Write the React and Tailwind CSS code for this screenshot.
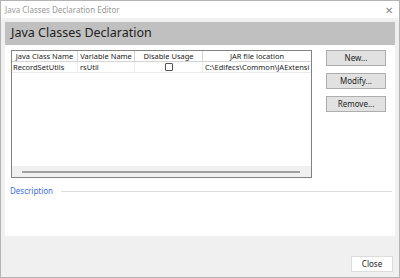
import React from 'react';

const font = { fontFamily: '"Noto Sans", "Open Sans", sans-serif' };

const Btn = ({ label, className = '' }) => (
  <button className={`h-[16px] w-[60px] border border-[#adadad] bg-[#e1e1e1] text-[8px] text-[#222] leading-none ${className}`}>{label}</button>
);

const App = () => {
  const cols = [
    { name: 'Java Class Name', w: 'w-[66px]' },
    { name: 'Variable Name', w: 'w-[57px]' },
    { name: 'Disable Usage', w: 'w-[68px]' },
    { name: 'JAR file location', w: 'flex-1' },
  ];

  return (
    <div className="w-[400px] h-[278px] flex flex-col border border-[#b4b4b4] bg-[#f0f0f0] overflow-hidden" style={font}>
      <div className="h-[17px] shrink-0 bg-white flex items-center justify-between pl-[4px] pr-[6px]">
        <span className="text-[8px] text-[#999]">Java Classes Declaration Editor</span>
        <span className="text-[10px] text-[#888] leading-none">✕</span>
      </div>
      <div className="flex-1 flex flex-col px-[4px] pt-[4px]">
        <div className="h-[214px] bg-white flex flex-col">
          <div className="h-[23px] bg-[#c0c0c0] flex items-center pl-[6px]">
            <span className="text-[12.5px] text-[#222]">Java Classes Declaration</span>
          </div>
          <div className="flex mt-[5px] pl-[6px]">
            <div className="w-[301px] h-[128px] border border-[#828282] flex flex-col bg-white">
              <div className="flex h-[11px] border-b border-[#d5d5d5]">
                {cols.map((c, i) => (
                  <div key={c.name} className={`${c.w} ${i < 3 ? 'border-r border-[#d5d5d5]' : ''} text-[7.5px] text-[#222] leading-[10px] text-center truncate`}>{c.name}</div>
                ))}
              </div>
              <div className="flex h-[11px] border-b border-[#ececec] text-[7.5px] text-[#222] leading-[10px]">
                <div className="w-[66px] pl-[1px] border-r border-[#ececec]">RecordSetUtils</div>
                <div className="w-[57px] pl-[2px] border-r border-[#ececec]">rsUtil</div>
                <div className="w-[68px] flex items-center justify-center border-r border-[#ececec]">
                  <div className="w-[8px] h-[8px] border border-[#555] rounded-[1px] bg-white" />
                </div>
                <div className="flex-1 pl-[2px] whitespace-nowrap overflow-hidden">C:\Edifecs\Common\JAExtensi</div>
              </div>
              <div className="flex-1" />
              <div className="h-[11px] bg-[#f0f0f0] flex items-center px-[10px]">
                <div className="flex-1 h-[2px] bg-[#a0a0a0] mr-[1px]" />
              </div>
            </div>
            <div className="flex flex-col gap-[7px] ml-[14px]">
              <Btn label="New..." />
              <Btn label="Modify..." />
              <Btn label="Remove..." />
            </div>
          </div>
          <div className="flex items-center mt-[7px] pl-[5px] pr-[3px]">
            <span className="text-[8px] text-[#3a6fd8]">Description</span>
            <div className="flex-1 h-[1px] bg-[#dcdcdc] ml-[8px]" />
          </div>
        </div>
        <div className="flex justify-end mt-[20px] pr-[2px]">
          <button className="h-[16px] w-[42px] border border-[#dcdcdc] bg-white text-[8px] text-[#222] leading-none">Close</button>
        </div>
      </div>
    </div>
  );
};

export default App;
